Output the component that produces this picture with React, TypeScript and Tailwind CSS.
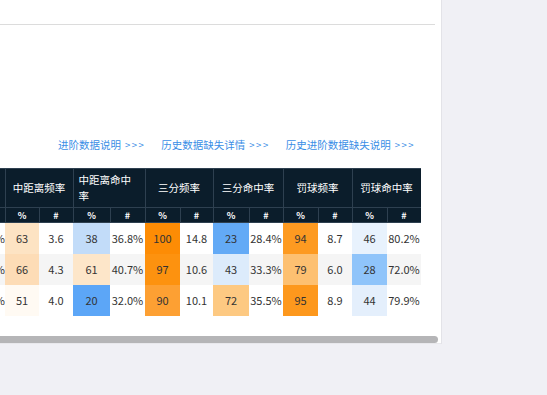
import React from "react";

type Cell = { v: string; bg?: string };

const groups = ["中距离频率", "中距离命中率", "三分频率", "三分命中率", "罚球频率", "罚球命中率"];
const colWidths = [5, 34, 34, 37, 35, 35, 33, 36, 34, 35, 34, 35, 34];

const rows: { lead: string; cells: Cell[] }[] = [
  {
    lead: "35.2%",
    cells: [
      { v: "63", bg: "bg-[#fde3c3]" }, { v: "3.6" },
      { v: "38", bg: "bg-[#c2dcf9]" }, { v: "36.8%" },
      { v: "100", bg: "bg-[#fd8c05]" }, { v: "14.8" },
      { v: "23", bg: "bg-[#63aaf6]" }, { v: "28.4%" },
      { v: "94", bg: "bg-[#fd9a21]" }, { v: "8.7" },
      { v: "46", bg: "bg-[#e8f2fd]" }, { v: "80.2%" },
    ],
  },
  {
    lead: "41.6%",
    cells: [
      { v: "66", bg: "bg-[#fddcb6]" }, { v: "4.3" },
      { v: "61", bg: "bg-[#fde6c9]" }, { v: "40.7%" },
      { v: "97", bg: "bg-[#fd920f]" }, { v: "10.6" },
      { v: "43", bg: "bg-[#dcebfb]" }, { v: "33.3%" },
      { v: "79", bg: "bg-[#fdc071]" }, { v: "6.0" },
      { v: "28", bg: "bg-[#8fc4fa]" }, { v: "72.0%" },
    ],
  },
  {
    lead: "38.5%",
    cells: [
      { v: "51", bg: "bg-[#fffaf3]" }, { v: "4.0" },
      { v: "20", bg: "bg-[#5ca6f7]" }, { v: "32.0%" },
      { v: "90", bg: "bg-[#fda033]" }, { v: "10.1" },
      { v: "72", bg: "bg-[#fdc982]" }, { v: "35.5%" },
      { v: "95", bg: "bg-[#fd981d]" }, { v: "8.9" },
      { v: "44", bg: "bg-[#e4effc]" }, { v: "79.9%" },
    ],
  },
];

const links = ["进阶数据说明", "历史数据缺失详情", "历史进阶数据缺失说明"];

const App = () => {
  return (
    <div
      className="w-[547px] h-[395px] bg-[#f0f0f5] overflow-hidden"
      style={{ fontFamily: '"Noto Sans CJK SC", "Noto Sans", sans-serif' }}
    >
      <div className="w-[442px] h-[344px] bg-white border-r border-[#e3e3e8] flex flex-col">
        {/* top divider */}
        <div className="h-[25px] mr-[6px] border-b border-[#dcdcdc]" />

        {/* links */}
        <div className="mt-[113px] h-[14px] flex justify-end gap-[16px] pr-[26px] text-[10.5px] leading-[14px] text-[#3a8ee6]">
          {links.map((l) => (
            <span key={l} className="whitespace-nowrap">
              {l}
              <span className="ml-[4px] text-[9.5px] tracking-[1.5px]">&gt;&gt;&gt;</span>
            </span>
          ))}
        </div>

        {/* table */}
        <div className="mt-[16px] w-[421px] overflow-hidden">
          <table className="table-fixed border-collapse w-[421px] text-center">
            <colgroup>
              {colWidths.map((w, i) => (
                <col key={i} style={{ width: w }} />
              ))}
            </colgroup>
            <thead className="bg-[#0b1d2b] text-white">
              <tr className="h-[39px]">
                <th className="border border-[#2e4050] border-l-0 p-0" />
                {groups.map((g) => (
                  <th
                    key={g}
                    colSpan={2}
                    className="border border-[#2e4050] font-normal text-[10.5px] leading-[16px] px-[4px] p-0"
                  >
                    <div className={g === "中距离命中率" ? "text-left pl-[1px]" : ""}>{g}</div>
                  </th>
                ))}
              </tr>
              <tr className="h-[15px]">
                <th className="border border-[#2e4050] border-l-0 p-0" />
                {groups.map((g) => (
                  <React.Fragment key={g}>
                    <th className="border border-[#2e4050] font-bold text-[9px] leading-[13px] p-0">%</th>
                    <th className="border border-[#2e4050] font-bold text-[9px] leading-[13px] p-0">#</th>
                  </React.Fragment>
                ))}
              </tr>
            </thead>
            <tbody className="text-[11px] text-[#333]">
              {rows.map((r, ri) => (
                <tr key={ri} className={ri === 1 ? "h-[31px] bg-[#f5f5f5]" : "h-[31px] bg-white"}>
                  <td className="p-0">
                    <div className="flex justify-end overflow-hidden w-[5px]">
                      <span className="whitespace-nowrap">{r.lead}</span>
                    </div>
                  </td>
                  {r.cells.map((c, ci) => (
                    <td key={ci} className={`p-0 whitespace-nowrap ${c.bg ?? ""}`}>
                      {c.v}
                    </td>
                  ))}
                </tr>
              ))}
            </tbody>
          </table>
        </div>

        {/* horizontal scrollbar */}
        <div className="mt-auto h-[7px] w-[438px] bg-[#b5b5b7] rounded-r-[4px]" />
        <div className="h-[1px] bg-[#e8e8ec]" />
      </div>
    </div>
  );
};

export default App;
